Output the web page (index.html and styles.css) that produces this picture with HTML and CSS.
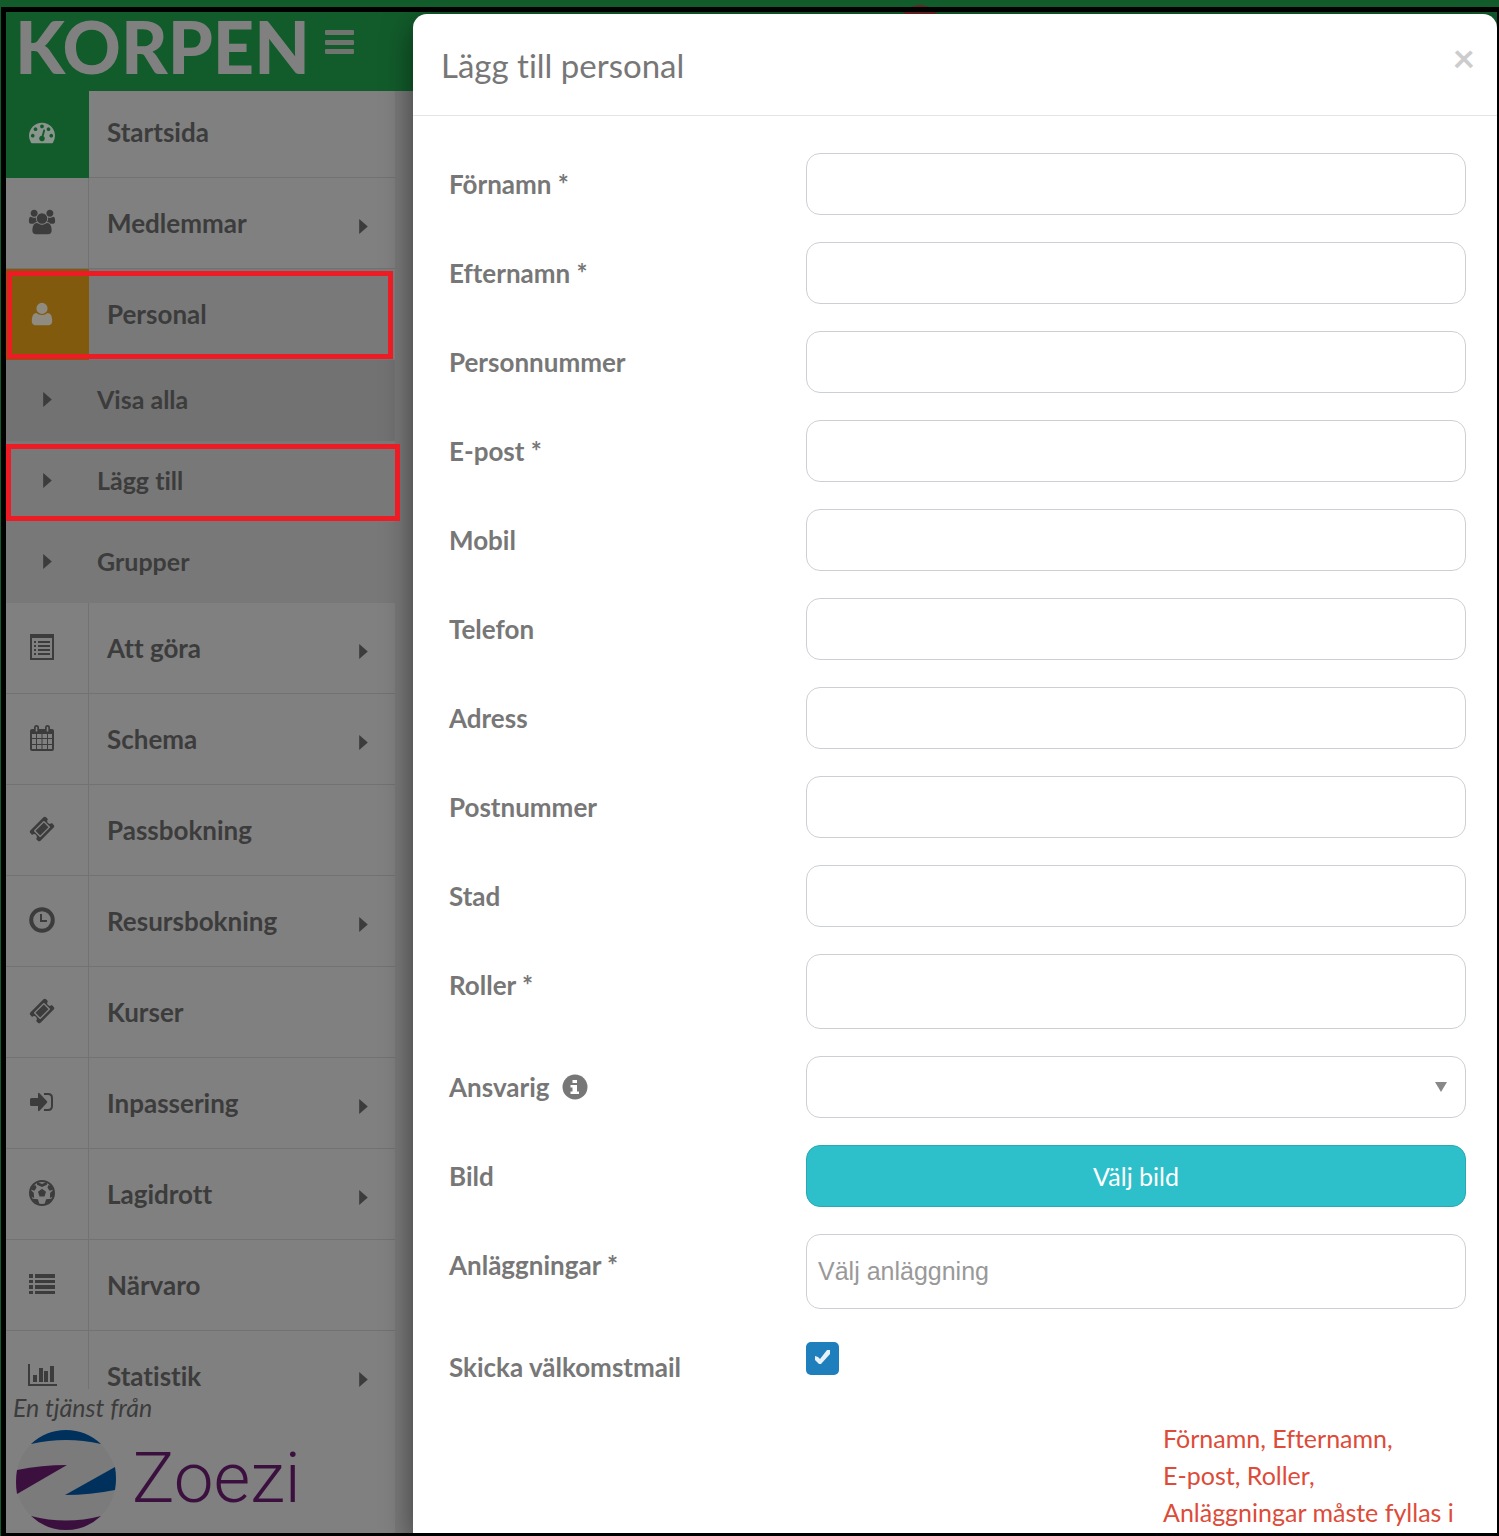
FILE: index.html
```html
<!DOCTYPE html>
<html lang="sv">
<head>
<meta charset="utf-8">
<meta name="viewport" content="width=device-width, initial-scale=1">
<title>Lägg till personal</title>
<link rel="stylesheet" href="styles.css">
</head>
<body>
<svg class="sprite" aria-hidden="true">
  <symbol id="caret" viewBox="0 0 8 14"><path d="M0 0L8 7L0 14z"/></symbol>
  <symbol id="ticket" viewBox="0 0 1792 1792"><path d="M1024 452l316 316-572 572-316-316zm-211 979l618-618q19-19 19-45t-19-45l-362-362q-18-18-45-18t-45 18l-618 618q-19 19-19 45t19 45l362 362q18 18 45 18t45-18zm889-637l-907 908q-37 37-90.5 37t-90.5-37l-126-125q56-56 56-136t-56-136-136-56-136 56l-125-126q-37-37-37-90.5t37-90.5l907-906q37-37 90.5-37t90.5 37l125 125q-56 56-56 136t56 136 136 56 136-56l126 125q37 37 37 90.5t-37 90.5z"/></symbol>
</svg>
<span class="badge"></span>
<div class="shell">
  <aside class="sidebar">
    <header class="brand">
      <span class="brand-name">KORPEN</span>
      <button class="menu-button" type="button" aria-label="Meny">
        <svg width="29" height="25" viewBox="0 0 29 25"><rect width="29" height="5" rx="1"/><rect y="10" width="29" height="5" rx="1"/><rect y="19" width="29" height="5" rx="1"/></svg>
      </button>
    </header>
    <nav class="nav">
      <ul class="menu">
        <li class="item item-home"><a href="#"><span class="icon"><svg width="26" height="26" viewBox="0 0 1792 1792"><path d="M384 1152q0-53-37.5-90.5t-90.5-37.5-90.5 37.5-37.5 90.5 37.5 90.5 90.5 37.5 90.5-37.5 37.5-90.5zm192-448q0-53-37.5-90.5t-90.5-37.5-90.5 37.5-37.5 90.5 37.5 90.5 90.5 37.5 90.5-37.5 37.5-90.5zm428 481l101-382q6-26-7.5-48.5t-38.5-29.5-48 6.5-30 39.5l-101 382q-60 5-107 43.5t-63 98.5q-20 77 20 146t117 89 146-20 89-117q16-60-6-117t-72-91zm660-33q0-53-37.5-90.5t-90.5-37.5-90.5 37.5-37.5 90.5 37.5 90.5 90.5 37.5 90.5-37.5 37.5-90.5zm-640-640q0-53-37.5-90.5t-90.5-37.5-90.5 37.5-37.5 90.5 37.5 90.5 90.5 37.5 90.5-37.5 37.5-90.5zm448 192q0-53-37.5-90.5t-90.5-37.5-90.5 37.5-37.5 90.5 37.5 90.5 90.5 37.5 90.5-37.5 37.5-90.5zm320 448q0 261-141 483-19 29-54 29h-1402q-35 0-54-29-141-221-141-483 0-182 71-348t191-286 286-191 348-71 348 71 286 191 191 286 71 348z"/></svg></span><span class="text">Startsida</span></a></li>
        <li class="item"><a href="#"><span class="icon"><svg width="28" height="26" viewBox="0 0 2048 1792"><path d="M657 896q-162 5-265 128h-134q-82 0-138-40.5t-56-118.5q0-353 124-353 6 0 43.5 21t97.5 42.5 119 21.5q67 0 133-23-5 37-5 66 0 139 81 256zm1071 637q0 120-73 189.5t-194 69.5h-874q-121 0-194-69.5t-73-189.5q0-53 3.5-103.5t14-109 26.5-108.5 43-97.5 62-81 85.5-53.5 111.5-20q10 0 43 21.5t73 48 107 48 135 21.5 135-21.5 107-48 73-48 43-21.5q61 0 111.5 20t85.5 53.5 62 81 43 97.5 26.5 108.5 14 109 3.5 103.5zm-1024-1277q0 106-75 181t-181 75-181-75-75-181 75-181 181-75 181 75 75 181zm704 384q0 159-112.5 271.5t-271.5 112.5-271.5-112.5-112.5-271.5 112.5-271.5 271.5-112.5 271.5 112.5 112.5 271.5zm576 225q0 78-56 118.5t-138 40.5h-134q-103-123-265-128 81-117 81-256 0-29-5-66 66 23 133 23 59 0 119-21.5t97.5-42.5 43.5-21q124 0 124 353zm-128-609q0 106-75 181t-181 75-181-75-75-181 75-181 181-75 181 75 75 181z"/></svg></span><span class="text">Medlemmar</span><svg class="caret"><use href="#caret"/></svg></a></li>
        <li class="item item-active marked"><a href="#"><span class="icon"><svg width="26" height="26" viewBox="0 0 1792 1792"><path d="M1600 1399q0 109-62.500 187t-150.500 78h-982q-88 0-150.500-78t-62.500-187q0-85 8.500-160.500t31.500-152 58.500-131 94-89 134.500-34.500q131 128 377 128t377-128q76 0 134.500 34.500t94 89 58.500 131 31.500 152 8.500 160.500zm-320-887q0 159-112.500 271.500t-271.500 112.500-271.500-112.500-112.500-271.500 112.500-271.500 271.500-112.500 271.500 112.500 112.500 271.500z"/></svg></span><span class="text">Personal</span></a></li>
        <li class="subitem subitem-hover"><a href="#"><svg class="caret"><use href="#caret"/></svg><span>Visa alla</span></a></li>
        <li class="subitem marked"><a href="#"><svg class="caret"><use href="#caret"/></svg><span>Lägg till</span></a></li>
        <li class="subitem"><a href="#"><svg class="caret"><use href="#caret"/></svg><span>Grupper</span></a></li>
        <li class="item"><a href="#"><span class="icon"><svg width="24" height="26" viewBox="0 0 24 26"><path fill-rule="evenodd" d="M0 0h24v26H0zM2 4v20h20V4z"/><path d="M4 7h2v2H4zM8 7h12v2H8zM4 11h2v2H4zM8 11h12v2H8zM4 15h2v2H4zM8 15h12v2H8zM4 19h2v2H4zM8 19h12v2H8z"/></svg></span><span class="text">Att göra</span><svg class="caret"><use href="#caret"/></svg></a></li>
        <li class="item"><a href="#"><span class="icon"><svg width="24" height="26" viewBox="0 0 24 26"><path fill-rule="evenodd" d="M2 4h2V2.500a2.500 2.500 0 0 1 5 0V4h6V2.500a2.500 2.500 0 0 1 5 0V4h2a2 2 0 0 1 2 2v18a2 2 0 0 1-2 2H2a2 2 0 0 1-2-2V6a2 2 0 0 1 2-2zM2 9v4h4V9zM7 9v4h4.500V9zM12.500 9v4H17V9zM18 9v4h4V9zM2 14v5h4v-5zM7 14v5h4.500v-5zM12.500 14v5H17v-5zM18 14v5h4v-5zM2 20v4h4v-4zM7 20v4h4.500v-4zM12.500 20v4H17v-4zM18 20v4h4v-4zM5.700 2.500v4h1.600v-4a.8.8 0 0 0-1.600 0zM16.700 2.500v4h1.600v-4a.8.8 0 0 0-1.600 0z"/></svg></span><span class="text">Schema</span><svg class="caret"><use href="#caret"/></svg></a></li>
        <li class="item"><a href="#"><span class="icon"><svg width="26" height="26"><use href="#ticket"/></svg></span><span class="text">Passbokning</span></a></li>
        <li class="item"><a href="#"><span class="icon"><svg width="26" height="26" viewBox="0 0 26 26"><circle cx="13" cy="13" r="10.800" fill="none" stroke="currentColor" stroke-width="4"/><path d="M11 7h2v6h5v2h-7z"/></svg></span><span class="text">Resursbokning</span><svg class="caret"><use href="#caret"/></svg></a></li>
        <li class="item"><a href="#"><span class="icon"><svg width="26" height="26"><use href="#ticket"/></svg></span><span class="text">Kurser</span></a></li>
        <li class="item"><a href="#"><span class="icon"><svg width="24" height="20" viewBox="0 0 24 20"><path d="M1.500 6H8V2q0-2 1.500-.8l7.500 8q.6.800 0 1.600l-7.500 8Q8 20 8 18v-4H1.500Q0 14 0 12.500v-5Q0 6 1.500 6z"/><path d="M14 2h4q4 0 4 4v8q0 4-4 4h-4" fill="none" stroke="currentColor" stroke-width="2"/></svg></span><span class="text">Inpassering</span><svg class="caret"><use href="#caret"/></svg></a></li>
        <li class="item"><a href="#"><span class="icon"><svg width="26" height="26" viewBox="0 0 26 26"><circle cx="13" cy="13" r="12" fill="none" stroke="currentColor" stroke-width="2"/><path d="M13 8.800l4 3-1.500 4.700h-5L9 11.800zM8 1.800L13 4l5-2.200v3L13 7 8 4.800zM25 9.500l-3.800 3.200-.3 5.200 3.300-1.500zM1 9.500l3.800 3.200.3 5.200-3.300-1.500zM22 6l-2.500-1-1 2.500 2 3.200 3.500-1zM4 6l2.500-1 1 2.500-2 3.200-3.500-1zM15.500 24.500l1.600-5.200 5.400-.5-2 3zM10.500 24.500l-1.600-5.200-5.400-.5 2 3z"/></svg></span><span class="text">Lagidrott</span><svg class="caret"><use href="#caret"/></svg></a></li>
        <li class="item"><a href="#"><span class="icon"><svg width="26" height="20" viewBox="0 0 26 20"><path d="M0 0h4v4H0zM6 0h20v4H6zM0 6h4v3H0zM6 6h20v3H6zM0 11h4v4H0zM6 11h20v4H6zM0 17h4v3H0zM6 17h20v3H6z"/></svg></span><span class="text">Närvaro</span></a></li>
        <li class="item"><a href="#"><span class="icon"><svg width="29" height="22" viewBox="0 0 29 22"><path d="M0 0h2v20h27v2H0zM5 11h4v7H5zM11 4h4v14h-4zM16 7h4v11h-4zM22 2h4v16h-4z"/></svg></span><span class="text">Statistik</span><svg class="caret"><use href="#caret"/></svg></a></li>
      </ul>
    </nav>
    <footer class="vendor">
      <em class="vendor-note">En tjänst från</em>
      <a class="vendor-logo" href="#">
        <svg width="102" height="102" viewBox="0 0 102 102"><circle cx="51" cy="51" r="50" fill="#7b7b7b"/><path d="M16 15Q31 1 51 1T86 15Q51 7 16 15z" fill="#00305c"/><path d="M16 87Q51 96 86 87Q71 101 51 101T16 87z" fill="#3b103f"/><path d="M2 41Q27 36 52 36L2 65Q0 53 2 41z" fill="#3b103f"/><path d="M50 66L100 38Q102 50 100 61Q75 66 50 66z" fill="#00305c"/></svg>
        <span class="vendor-name">Zoezi</span>
      </a>
    </footer>
  </aside>

  <main class="dialog" role="dialog" aria-labelledby="dialog-title">
    <header class="dialog-head">
      <h1 id="dialog-title">Lägg till personal</h1>
      <button class="close" type="button" aria-label="Stäng">×</button>
    </header>
    <form class="form">
      <div class="row"><label for="fornamn">Förnamn *</label><input class="field" id="fornamn" type="text"></div>
      <div class="row"><label for="efternamn">Efternamn *</label><input class="field" id="efternamn" type="text"></div>
      <div class="row"><label for="personnummer">Personnummer</label><input class="field" id="personnummer" type="text"></div>
      <div class="row"><label for="epost">E-post *</label><input class="field" id="epost" type="email"></div>
      <div class="row"><label for="mobil">Mobil</label><input class="field" id="mobil" type="tel"></div>
      <div class="row"><label for="telefon">Telefon</label><input class="field" id="telefon" type="tel"></div>
      <div class="row"><label for="adress">Adress</label><input class="field" id="adress" type="text"></div>
      <div class="row"><label for="postnummer">Postnummer</label><input class="field" id="postnummer" type="text"></div>
      <div class="row"><label for="stad">Stad</label><input class="field" id="stad" type="text"></div>
      <div class="row"><label for="roller">Roller *</label><input class="field field-tall" id="roller" type="text"></div>
      <div class="row">
        <label for="ansvarig">Ansvarig <svg class="info" width="26" height="26" viewBox="0 0 26 26"><circle cx="13" cy="13" r="12.500" fill="#777"/><path d="M10.500 6h4.500v3h-4.500zM8.500 11H15v6.500h2V20H8.500v-2.500h2V13.500h-2z" fill="#fff"/></svg></label>
        <div class="select">
          <select class="field" id="ansvarig"><option></option></select>
          <svg width="12" height="10" viewBox="0 0 12 10"><path d="M0 0H12L6 10z" fill="#888"/></svg>
        </div>
      </div>
      <div class="row"><label for="bild">Bild</label><button class="pick" id="bild" type="button">Välj bild</button></div>
      <div class="row"><label for="anlaggningar">Anläggningar *</label><input class="field field-tall" id="anlaggningar" type="text" placeholder="Välj anläggning"></div>
      <div class="row">
        <label for="mail">Skicka välkomstmail</label>
        <div class="check">
          <input id="mail" type="checkbox" checked>
          <svg width="33" height="33" viewBox="0 0 33 33"><path d="M9 14l3 1 2 2 7-9h3v4l-9 10h-2l-4-4z" fill="#e6f1f8"/></svg>
        </div>
      </div>
      <p class="error">Förnamn, Efternamn, <span class="term">E-post,</span> Roller, Anläggningar måste fyllas i</p>
    </form>
  </main>
</div>
</body>
</html>
```
FILE: styles.css
```css
* {
  box-sizing: border-box;
}

body {
  height: 100vh;
  margin: 0;
  padding: 7px 0 0 1px;
  overflow: hidden;
  background: #125c2b;
  font-family: Lato, "Open Sans", sans-serif;
  font-size: 26px;
  font-variant-ligatures: none;
  line-height: 37px;
  color: #777;
}

.sprite {
  position: absolute;
  width: 0;
  height: 0;
}

.badge {
  position: absolute;
  top: 5px;
  left: 900px;
  width: 40px;
  height: 40px;
  border-radius: 50%;
  background: #6b2422;
}

.shell {
  position: relative;
  display: flex;
  height: 100%;
  border: solid #000;
  border-width: 5px 2px 3px 5px;
  overflow: hidden;
  background: linear-gradient(transparent 79px, #797979 79px) no-repeat;
}

a {
  color: inherit;
  text-decoration: none;
}

button {
  padding: 0;
  border: 0;
  background: none;
  font: inherit;
  font-variant-ligatures: inherit;
  cursor: pointer;
}

/* Sidebar */

.sidebar {
  display: flex;
  flex: 0 0 392px;
  flex-direction: column;
  min-height: 0;
  background: linear-gradient(transparent 79px, #808080 79px);
  border-right: 3px solid transparent;
  background-clip: padding-box;
  color: #3c3c3c;
  fill: currentColor;
}

.brand {
  display: flex;
  flex: none;
  align-items: flex-start;
  gap: 16px;
  height: 79px;
  padding-left: 9px;
  background: #125c2b;
}

.brand-name {
  width: 294px;
  font-size: 72px;
  font-weight: 900;
  line-height: 68px;
  color: #808080;
}

.menu-button {
  height: 25px;
  margin-top: 18px;
  line-height: 0;
  fill: #6f746f;
}

/* Reaches past the sidebar so that a marker can overhang its edge. */
.nav {
  flex: 1;
  min-height: 0;
  margin-right: -8px;
  padding-right: 8px;
  overflow: hidden;
}

.menu {
  margin: 0;
  padding: 0;
  list-style: none;
  font-weight: 700;
}

.item a {
  display: flex;
  align-items: center;
  height: 91px;
  padding-right: 27px;
  border-bottom: 1px solid #727272;
}

.item-home a {
  height: 87px;
}

.icon {
  display: flex;
  align-items: center;
  justify-content: center;
  align-self: stretch;
  width: 83px;
  padding: 0 10px 2px 0;
  border-right: 1px solid #727272;
}

.item .text {
  flex: 1;
  padding-left: 18px;
}

.caret {
  width: 9px;
  height: 15px;
}

.item .caret {
  margin-top: 7px;
}

.item-home .icon {
  margin-bottom: -1px;
  padding-bottom: 5px;
  border-color: #125c2b;
  background: #125c2b;
  color: #8a958d;
}

.item-home .text {
  padding-bottom: 3px;
}

.item-active a {
  border-color: #757575;
  background: #797979;
}

.item-active .icon {
  margin-bottom: -1px;
  border-color: #825a0d;
  background: #825a0d;
  color: #8f8b80;
}

.subitem a {
  display: flex;
  align-items: center;
  gap: 45px;
  height: 81px;
  padding: 0 0 2px 37px;
  background: #787878;
  font-size: 25px;
}

.subitem-hover a {
  background: #727272;
}

.marked {
  position: relative;
}

.marked::after {
  content: "";
  position: absolute;
  inset: 2px 2px 1px 1px;
  border: 5px solid #ed1c24;
}

.subitem.marked::after {
  inset: 3px -5px 1px 0;
}

.vendor {
  flex: none;
  padding: 0 7px 2px;
}

.vendor-note {
  display: block;
  font-size: 25px;
}

.vendor-logo {
  display: flex;
  align-items: center;
  gap: 15px;
  padding: 3px 0 0 2px;
}

.vendor-name {
  padding-bottom: 4px;
  font-family: Roboto, sans-serif;
  font-size: 71px;
  font-weight: 300;
  line-height: 92px;
  color: #3b103f;
}

/* Dialog */

.dialog {
  flex: 1;
  min-width: 0;
  margin: 2px 0 0 15px;
  border-radius: 14px 14px 0 0;
  background: #fff;
  box-shadow: 0 10px 30px rgba(0, 0, 0, 0.5);
}

.dialog-head {
  display: flex;
  align-items: flex-start;
  justify-content: space-between;
  height: 102px;
  padding: 24px 22px 0 28px;
  border-bottom: 1px solid #e5e5e5;
}

.dialog-head h1 {
  margin: 0;
  font-size: 33px;
  font-weight: 400;
  line-height: 54px;
}

.close {
  font-size: 39px;
  font-weight: 700;
  line-height: 39px;
  color: #ccc;
}

.form {
  display: flex;
  flex-direction: column;
  gap: 27px;
  padding: 37px 31px 0 36px;
}

.row {
  display: grid;
  grid-template-columns: 357px 1fr;
  align-items: start;
}

.row label {
  font-weight: 700;
  line-height: 62px;
}

.info {
  margin-left: 6px;
  vertical-align: -3px;
}

.field {
  width: 100%;
  height: 62px;
  padding: 0 11px;
  border: 1px solid #ccd0d4;
  border-radius: 14px;
  background: #fff;
  font-family: "Liberation Sans", Arial, sans-serif;
  font-size: 25px;
  color: #555;
  appearance: none;
}

.field-tall {
  height: 75px;
}

.field::placeholder {
  color: #999;
  opacity: 1;
}

.select,
.check {
  display: grid;
}

.select > *,
.check > * {
  grid-area: 1 / 1;
}

.select svg {
  align-self: center;
  justify-self: end;
  margin-right: 19px;
  pointer-events: none;
}

.pick {
  height: 62px;
  border: 1px solid #28a9b3;
  border-radius: 14px;
  background: #2dc0cb;
  font-size: 25px;
  color: #fff;
}

.check {
  justify-content: start;
  padding-top: 6px;
}

.check input {
  width: 33px;
  height: 33px;
  margin: 0;
  border-radius: 5px;
  background: #1f7ebc;
  appearance: none;
}

.check svg {
  pointer-events: none;
}

.error {
  width: 303px;
  margin: -5px 0 0 auto;
  padding-right: 4px;
  font-size: 25px;
  color: #dd4b39;
}

.term {
  white-space: nowrap;
}
```
